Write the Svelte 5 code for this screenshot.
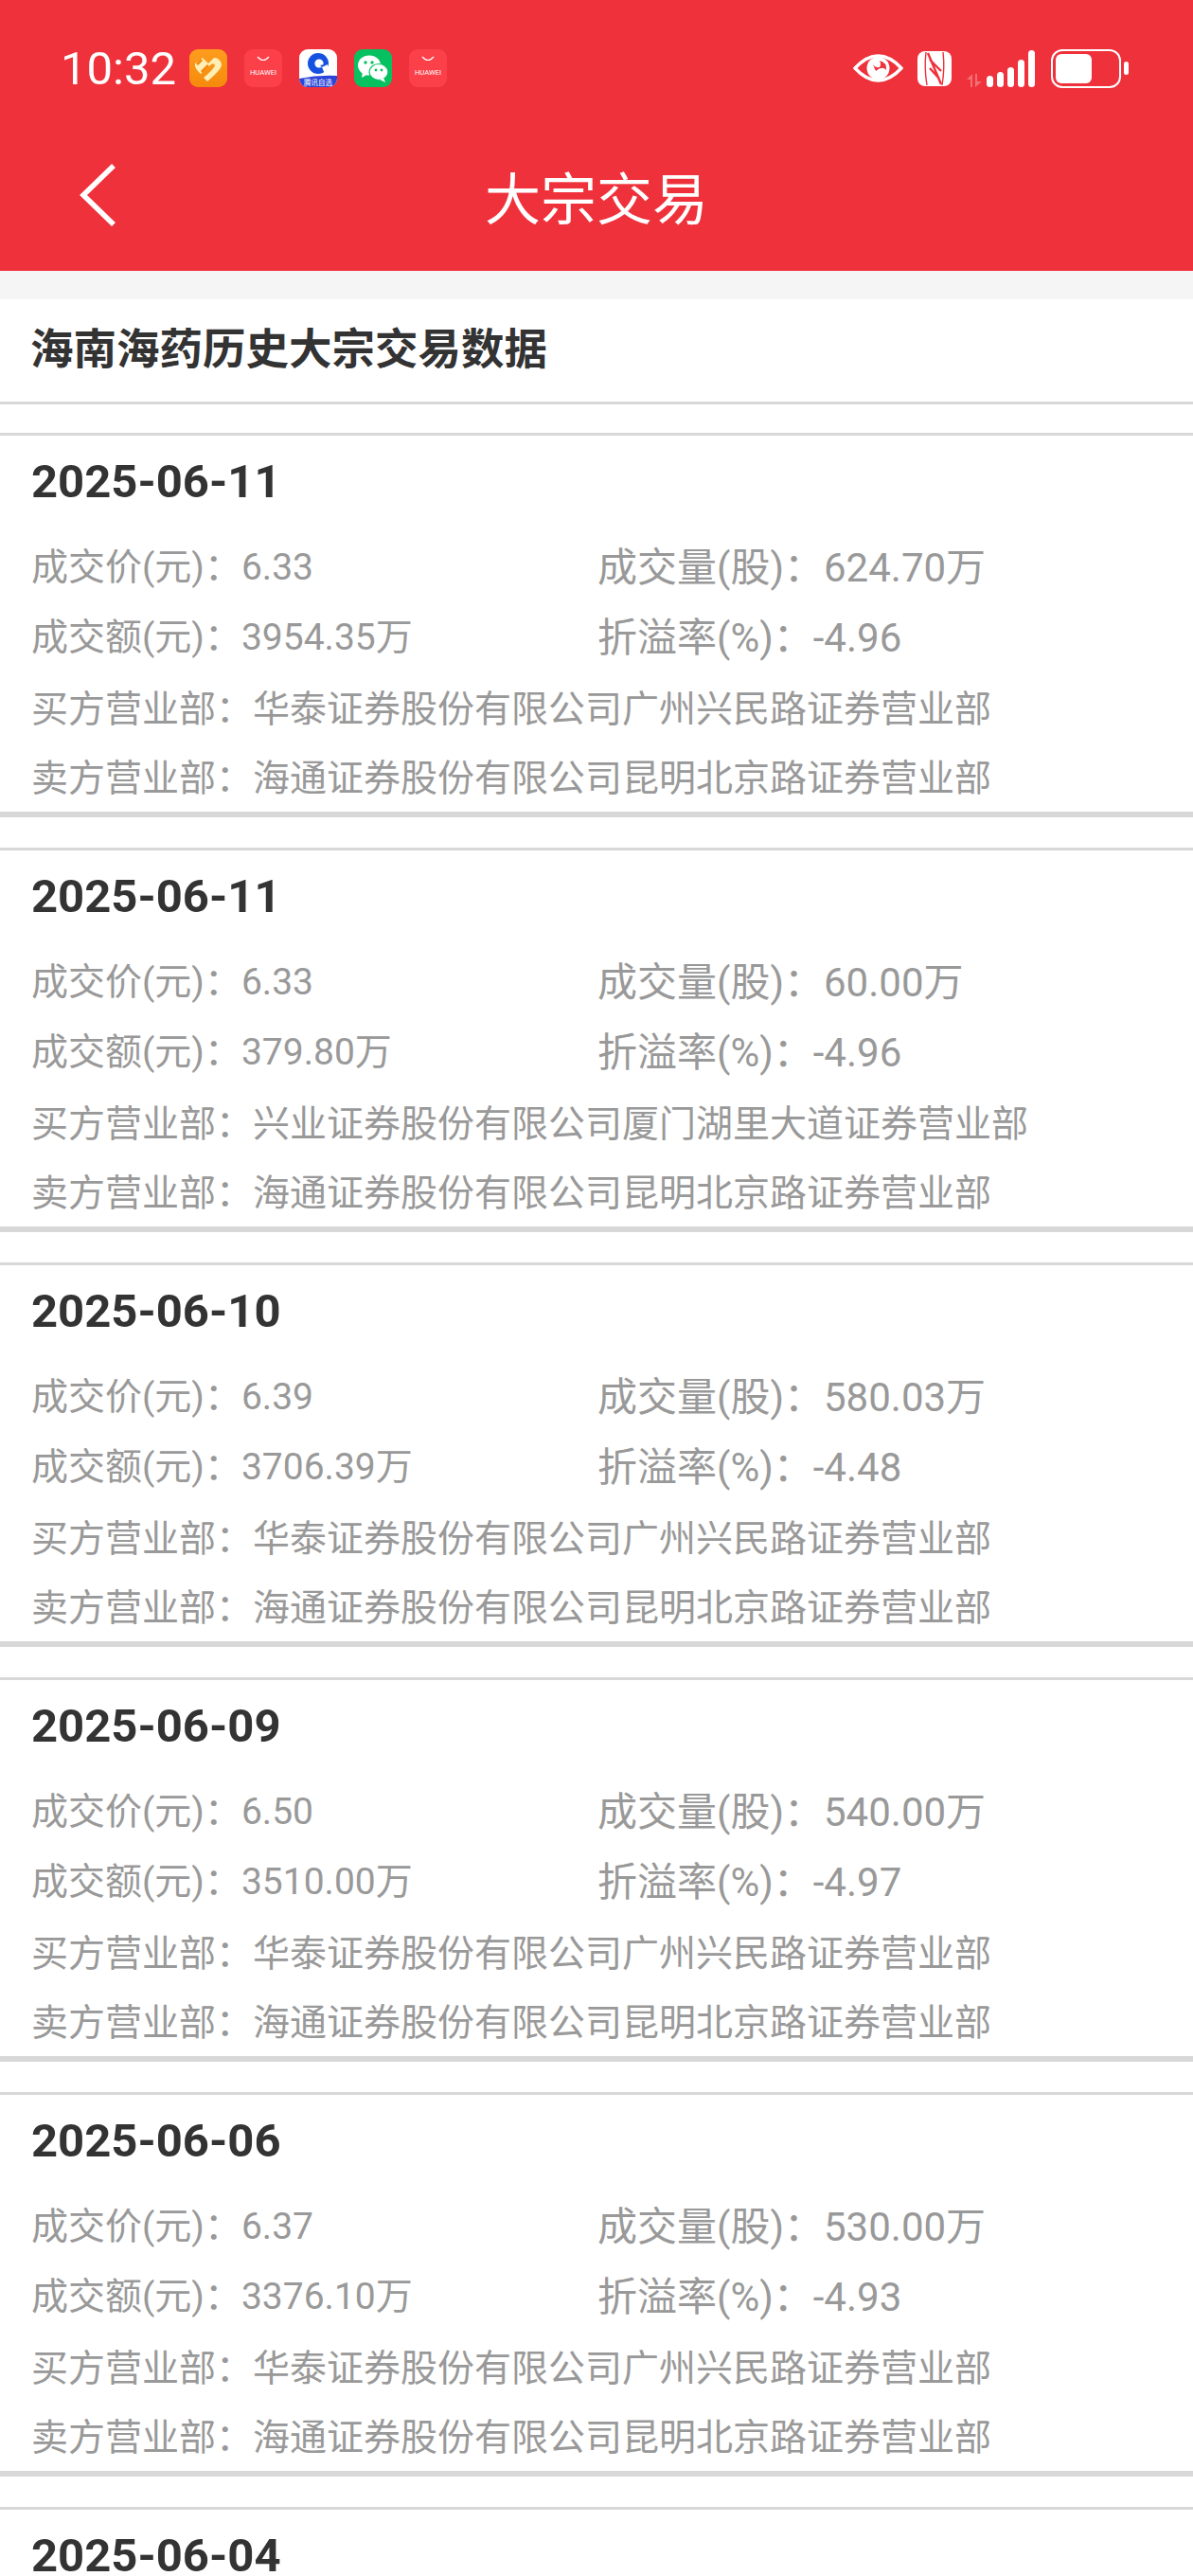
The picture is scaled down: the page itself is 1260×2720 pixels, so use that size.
<script>
  const trades = [
    { date: "2025-06-11", price: "6.33", volume: "624.70万", amount: "3954.35万", premium: "-4.96", buyer: "华泰证券股份有限公司广州兴民路证券营业部", seller: "海通证券股份有限公司昆明北京路证券营业部" },
    { date: "2025-06-11", price: "6.33", volume: "60.00万", amount: "379.80万", premium: "-4.96", buyer: "兴业证券股份有限公司厦门湖里大道证券营业部", seller: "海通证券股份有限公司昆明北京路证券营业部" },
    { date: "2025-06-10", price: "6.39", volume: "580.03万", amount: "3706.39万", premium: "-4.48", buyer: "华泰证券股份有限公司广州兴民路证券营业部", seller: "海通证券股份有限公司昆明北京路证券营业部" },
    { date: "2025-06-09", price: "6.50", volume: "540.00万", amount: "3510.00万", premium: "-4.97", buyer: "华泰证券股份有限公司广州兴民路证券营业部", seller: "海通证券股份有限公司昆明北京路证券营业部" },
    { date: "2025-06-06", price: "6.37", volume: "530.00万", amount: "3376.10万", premium: "-4.93", buyer: "华泰证券股份有限公司广州兴民路证券营业部", seller: "海通证券股份有限公司昆明北京路证券营业部" }
  ];
</script>

{#snippet huawei()}
  <div class="tile tile-huawei">
    <svg viewBox="0 0 40 40" width="40" height="40">
      <path d="M14 8 Q20 15 26 8" fill="none" stroke="#fff" stroke-width="1.2" />
      <text x="20" y="27" class="tile-text">HUAWEI</text>
    </svg>
  </div>
{/snippet}

<div class="page">
  <header class="top">
    <div class="status">
      <span class="time">10:32</span>
      <div class="tiles">
        <div class="tile tile-orange">
          <svg viewBox="0 0 40 40" width="40" height="40">
            <path d="M6 15 L14 9 L20 15 L26 9 Q33 9 34 17 Q33 22 19 34 L15 30 Q26 21 27 17 Q26 14 23 16 L12 26 Q5 20 6 15Z" fill="#ffeeb5" />
            <path d="M13 11 L8 16 M20 17 L13 24" stroke="#f58a0c" stroke-width="3" />
          </svg>
        </div>
        {@render huawei()}
        <div class="tile tile-blue">
          <svg viewBox="0 0 40 40" width="40" height="40">
            <path d="M0 31 Q20 27 40 28 V40 H0Z" fill="#2b45d8" />
            <circle cx="20" cy="15" r="11" fill="#1552e0" />
            <circle cx="21" cy="15" r="4.6" fill="#fff" />
            <path d="M22 17 L28 23 L31 15Z" fill="#1552e0" />
            <path d="M24 19 L30 16 L32 22 L27 26Z" fill="#fff" />
            <text x="20" y="37.5" class="tile-cn">腾讯自选</text>
          </svg>
        </div>
        <div class="tile tile-green">
          <svg viewBox="0 0 40 40" width="40" height="40">
            <ellipse cx="16" cy="17" rx="12" ry="10.5" fill="#fff" />
            <path d="M9 24 L8 30 L15 26Z" fill="#fff" />
            <ellipse cx="26" cy="24" rx="10" ry="8.5" fill="#fff" stroke="#07c160" stroke-width="1.2" />
            <path d="M31 30 L33 35 L27 32Z" fill="#fff" />
            <circle cx="12" cy="14" r="1.7" fill="#07c160" />
            <circle cx="19" cy="14" r="1.7" fill="#07c160" />
            <circle cx="23" cy="22" r="1.4" fill="#07c160" />
            <circle cx="29" cy="22" r="1.4" fill="#07c160" />
          </svg>
        </div>
        {@render huawei()}
      </div>
      <div class="sys">
        <svg class="eye" viewBox="0 0 53 30" width="53" height="30">
          <path d="M2 15 Q14 2 26.5 2 Q39 2 51 15 Q39 28 26.5 28 Q14 28 2 15Z" fill="none" stroke="#fff" stroke-width="3.4" />
          <circle cx="26.5" cy="15" r="12" fill="#fff" />
          <path d="M20 9 Q22 15 28 14 Q30 11 28 7 Q36 9 35 17 Q31 12 24 18Z" fill="#ef313b" />
        </svg>
        <svg class="nfc" viewBox="0 0 36 37" width="36" height="37">
          <rect width="36" height="37" rx="8" fill="#fff" />
          <path d="M9 1 Q7 18 10 36 M27 1 Q29 18 26 36" fill="none" stroke="#ef313b" stroke-width="1.4" />
          <path d="M11 2 L25 35 M13 9 L25 21 M13 18 L23 29" fill="none" stroke="#ef313b" stroke-width="2.4" />
        </svg>
        <div class="signal">
          <svg viewBox="0 0 16 14" width="16" height="14">
            <path d="M6 0 V14 H4 V6 H0Z M9 0 H11 V8 H16 L9 14Z" fill="#fff" opacity="0.3" />
          </svg>
          <span class="bar" style="height:12px"></span>
          <span class="bar" style="height:16px"></span>
          <span class="bar" style="height:21px"></span>
          <span class="bar" style="height:29px"></span>
          <span class="bar" style="height:39px"></span>
        </div>
        <div class="battery">
          <div class="cell"><div class="fill"></div></div>
          <div class="nub"></div>
        </div>
      </div>
    </div>
    <div class="nav">
      <svg class="back" viewBox="0 0 40 68" width="40" height="68">
        <path d="M37 3 L5 34 L37 65" fill="none" stroke="#fff" stroke-width="5.5" />
      </svg>
      <h1>大宗交易</h1>
    </div>
  </header>

  <div class="spacer"></div>

  <h2 class="heading">海南海药历史大宗交易数据</h2>

  <div class="list">
    {#each trades as t}
      <section class="card">
        <div class="date">{t.date}</div>
        <div class="rows">
          <div class="pair">
            <div class="left">成交价(元)：{t.price}</div>
            <div class="right">成交量(股)：{t.volume}</div>
          </div>
          <div class="pair">
            <div class="left">成交额(元)：{t.amount}</div>
            <div class="right">折溢率(%)：{t.premium}</div>
          </div>
          <div class="line">买方营业部：{t.buyer}</div>
          <div class="line">卖方营业部：{t.seller}</div>
        </div>
      </section>
    {/each}
    <section class="card">
      <div class="date">2025-06-04</div>
    </section>
  </div>
</div>

<style>
  :global(body) {
    margin: 0;
    background: #fff;
  }

  .page {
    width: 1260px;
    height: 2720px;
    overflow: hidden;
    background: #fff;
    font-family: "Roboto", "Noto Sans CJK SC", sans-serif;
  }

  .top {
    height: 286px;
    background: #ef313b;
    color: #fff;
    display: flex;
    flex-direction: column;
  }

  .status {
    height: 144px;
    flex: none;
    display: flex;
    align-items: center;
    padding: 0 68px 0 64px;
    box-sizing: border-box;
  }

  .time {
    font-size: 49px;
    width: 136px;
  }

  .tiles {
    display: flex;
    gap: 18px;
  }

  .tile {
    width: 40px;
    height: 40px;
    border-radius: 9px;
    overflow: hidden;
  }

  .tile svg {
    display: block;
  }

  .tile-orange {
    background: linear-gradient(#ff9d1e, #f58a0c);
  }

  .tile-huawei {
    background: #fb4049;
  }

  .tile-blue {
    background: #fff;
  }

  .tile-green {
    background: #07c160;
  }

  .tile-text {
    font-size: 7.6px;
    fill: #fff;
    text-anchor: middle;
  }

  .tile-cn {
    font-size: 7.5px;
    fill: #fff;
    text-anchor: middle;
  }

  .sys {
    margin-left: auto;
    display: flex;
    align-items: center;
  }

  .eye {
    margin-right: 15px;
  }

  .nfc {
    margin-right: 16px;
  }

  .signal {
    display: flex;
    align-items: flex-end;
    gap: 4px;
    margin-right: 17px;
    height: 39px;
  }

  .signal svg {
    margin-right: 1px;
  }

  .bar {
    width: 7px;
    background: #fff;
    border-radius: 3.5px;
  }

  .battery {
    display: flex;
    align-items: center;
    gap: 3px;
  }

  .cell {
    width: 74px;
    height: 41px;
    box-sizing: border-box;
    border: 2.5px solid #fff;
    border-radius: 12px;
    padding: 3px;
  }

  .fill {
    width: 38px;
    height: 100%;
    background: #fff;
    border-radius: 6px;
  }

  .nub {
    width: 5px;
    height: 14px;
    background: #fff;
    border-radius: 2.5px;
  }

  .nav {
    flex: 1;
    display: flex;
    align-items: center;
    justify-content: center;
    position: relative;
    padding-bottom: 18px;
  }

  .back {
    position: absolute;
    left: 83px;
    top: 28px;
  }

  h1 {
    margin: 0;
    font-size: 59px;
    font-weight: 400;
  }

  .spacer {
    height: 30px;
    background: #f5f5f5;
  }

  .heading {
    margin: 0;
    height: 111px;
    box-sizing: border-box;
    padding: 0 32px 10px;
    display: flex;
    align-items: center;
    font-size: 45.5px;
    font-weight: 700;
    color: #333;
    border-bottom: 3px solid #d8d8d8;
  }

  .list {
    padding-top: 30px;
    display: flex;
    flex-direction: column;
    gap: 32px;
  }

  .card {
    height: 406px;
    flex: none;
    box-sizing: border-box;
    border-top: 3px solid #d8d8d8;
    border-bottom: 6px solid #d8d8d8;
    padding: 0 33px;
  }

  .date {
    height: 77px;
    box-sizing: border-box;
    display: flex;
    align-items: flex-end;
    font-size: 49px;
    line-height: 56px;
    font-weight: 700;
    color: #333;
  }

  .rows {
    padding-top: 21px;
    display: flex;
    flex-direction: column;
    color: #999;
  }

  .pair {
    display: flex;
    height: 74px;
    align-items: center;
  }

  .pair + .line {
    margin-top: 2px;
  }

  .left {
    width: 598px;
    font-size: 39px;
  }

  .right {
    font-size: 42px;
  }

  .line {
    height: 73px;
    display: flex;
    align-items: center;
    font-size: 39px;
  }
</style>
